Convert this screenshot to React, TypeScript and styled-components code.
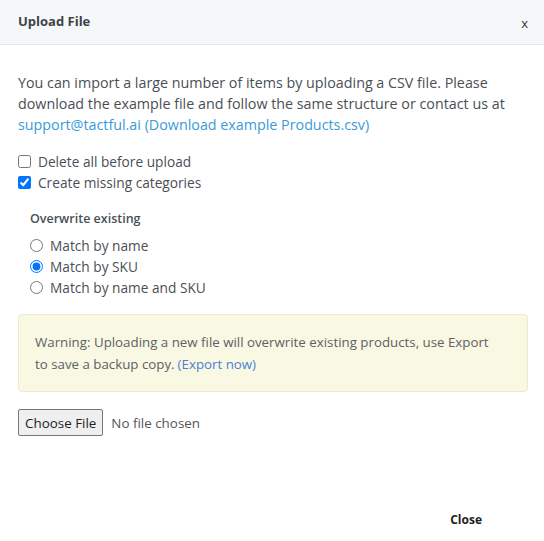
import React, { useState } from 'react';
import styled, { createGlobalStyle } from 'styled-components';

const GlobalStyle = createGlobalStyle`
  html, body {
    margin: 0;
    padding: 0;
    background: #ffffff;
  }
  body {
    font-family: 'Open Sans', 'Noto Sans', Arial, sans-serif;
    color: #495057;
  }
`;

const Modal = styled.div`
  width: 544px;
  height: 541px;
  display: flex;
  flex-direction: column;
  background: #fff;
`;

const Header = styled.div`
  height: 45px;
  box-sizing: border-box;
  display: flex;
  align-items: center;
  justify-content: space-between;
  padding: 0 16px 3px 18px;
  background: #f5f8fa;
  border-bottom: 1px solid #e6e9ec;
`;

const Title = styled.h5`
  margin: 0;
  font-size: 13px;
  font-weight: 700;
  color: #3e4246;
`;

const CloseX = styled.button`
  background: none;
  border: none;
  padding: 0;
  font-family: inherit;
  font-size: 13px;
  color: #333;
  cursor: pointer;
  margin-top: 4px;
`;

const Body = styled.div`
  flex: 1;
  padding: 27px 16px 0 18px;
  display: flex;
  flex-direction: column;
`;

const Intro = styled.p`
  margin: 0 0 16px;
  font-size: 14.3px;
  line-height: 21px;
  color: #4a4f55;
`;

const Link = styled.a`
  color: #3a9ad9;
  text-decoration: none;
`;

const CheckRow = styled.label`
  display: flex;
  align-items: center;
  gap: 7px;
  font-size: 13.7px;
  line-height: 21px;
  color: #4a4f55;

  input {
    margin: 0;
    width: 13px;
    height: 13px;
  }
`;

const Group = styled.div`
  padding: 16px 0 0 12px;
  display: flex;
  flex-direction: column;
`;

const GroupLabel = styled.div`
  font-size: 12.5px;
  font-weight: 600;
  color: #4a4f55;
  line-height: 20px;
  margin-bottom: 6px;
`;

const Warning = styled.div`
  margin: 16px 0 0;
  padding: 16px 36px 16px 16px;
  background: #f9f8e3;
  border: 1px solid #eceacd;
  border-radius: 4px;
  font-size: 13.3px;
  line-height: 22px;
  color: #5c6166;
`;

const ExportLink = styled.a`
  color: #4a7fd6;
  text-decoration: none;
  margin-left: 3px;
`;

const FileRow = styled.div`
  margin-top: 17px;

  input {
    font-family: 'Open Sans', 'Noto Sans', Arial, sans-serif;
    font-size: 13.4px;
    color: #555;
  }

  input::file-selector-button {
    font-family: inherit;
    font-size: 13.4px;
    color: #222;
    height: 27px;
    padding: 0 6px;
    margin-right: 8px;
    background: #efefef;
    border: 1px solid #767676;
    border-radius: 2px;
  }
`;

const Footer = styled.div`
  display: flex;
  justify-content: flex-end;
  padding: 0 60px 9px 0;
`;

const FooterButton = styled.button`
  background: none;
  border: none;
  font-family: inherit;
  font-size: 12px;
  font-weight: 700;
  color: #222;
  padding: 4px 2px;
  cursor: pointer;
`;

const App: React.FC = () => {
  const [deleteAll, setDeleteAll] = useState(false);
  const [createMissing, setCreateMissing] = useState(true);
  const [match, setMatch] = useState('sku');

  return (
    <>
      <GlobalStyle />
      <Modal>
        <Header>
          <Title>Upload File</Title>
          <CloseX>x</CloseX>
        </Header>
        <Body>
          <Intro>
            You can import a large number of items by uploading a CSV file. Please download the example file
            and follow the same structure or contact us at{' '}
            <Link href="#">support@tactful.ai</Link> <Link href="#">(Download example Products.csv)</Link>
          </Intro>

          <CheckRow>
            <input type="checkbox" checked={deleteAll} onChange={() => setDeleteAll(!deleteAll)} />
            Delete all before upload
          </CheckRow>
          <CheckRow>
            <input type="checkbox" checked={createMissing} onChange={() => setCreateMissing(!createMissing)} />
            Create missing categories
          </CheckRow>

          <Group>
            <GroupLabel>Overwrite existing</GroupLabel>
            <CheckRow>
              <input type="radio" name="match" checked={match === 'name'} onChange={() => setMatch('name')} />
              Match by name
            </CheckRow>
            <CheckRow>
              <input type="radio" name="match" checked={match === 'sku'} onChange={() => setMatch('sku')} />
              Match by SKU
            </CheckRow>
            <CheckRow>
              <input type="radio" name="match" checked={match === 'both'} onChange={() => setMatch('both')} />
              Match by name and SKU
            </CheckRow>
          </Group>

          <Warning>
            Warning: Uploading a new file will overwrite existing products, use Export to save a backup copy.
            <ExportLink href="#">(Export now)</ExportLink>
          </Warning>

          <FileRow>
            <input type="file" />
          </FileRow>
        </Body>
        <Footer>
          <FooterButton>Close</FooterButton>
        </Footer>
      </Modal>
    </>
  );
};

export default App;
